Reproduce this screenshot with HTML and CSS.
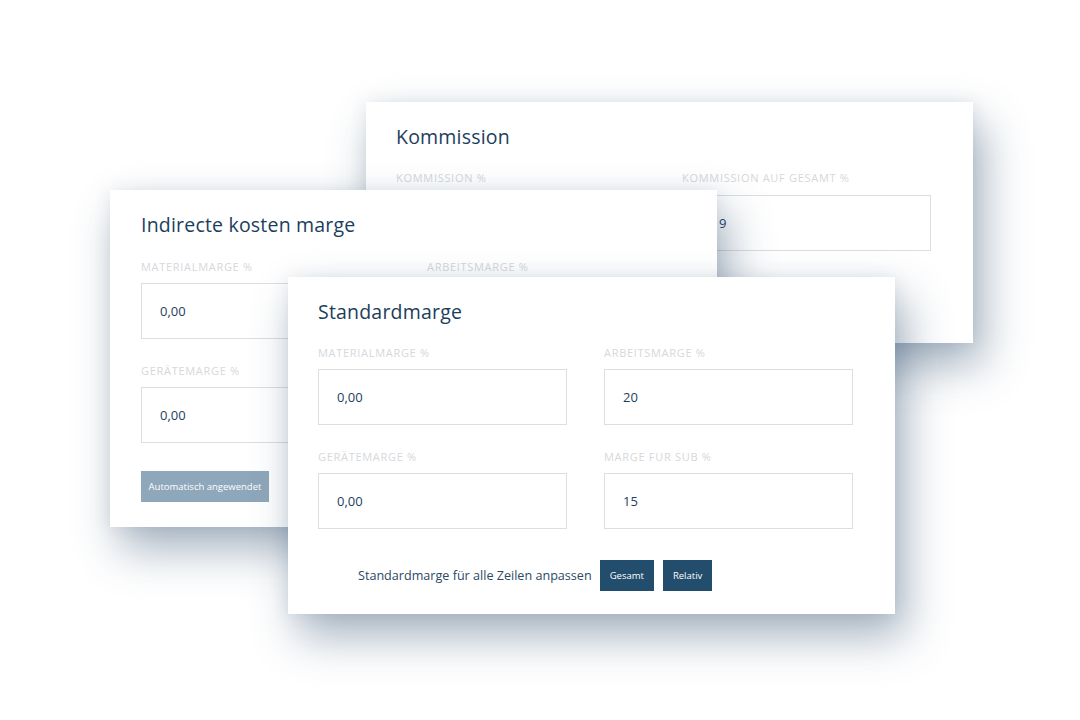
FILE: index.html
```html
<!DOCTYPE html>
<html lang="de">
<head>
<meta charset="utf-8">
<link rel="stylesheet" href="styles.css">
</head>
<body>
<div class="stage">
  <section class="card card-kommission">
    <h2 class="card-title">Kommission</h2>
    <div class="fields">
      <div class="field">
        <div class="label">Kommission %</div>
        <div class="input"></div>
      </div>
      <div class="field">
        <div class="label">Kommission auf Gesamt %</div>
        <div class="input">9</div>
      </div>
    </div>
  </section>

  <section class="card card-indirect">
    <h2 class="card-title">Indirecte kosten marge</h2>
    <div class="fields">
      <div class="field">
        <div class="label">Materialmarge %</div>
        <div class="input">0,00</div>
      </div>
      <div class="field">
        <div class="label">Arbeitsmarge %</div>
        <div class="input"></div>
      </div>
      <div class="field">
        <div class="label">Gerätemarge %</div>
        <div class="input">0,00</div>
      </div>
      <div class="field">
        <div class="label">Marge für Sub %</div>
        <div class="input"></div>
      </div>
    </div>
    <div class="actions">
      <button class="btn btn-muted">Automatisch angewendet</button>
    </div>
  </section>

  <section class="card card-standard">
    <h2 class="card-title">Standardmarge</h2>
    <div class="fields">
      <div class="field">
        <div class="label">Materialmarge %</div>
        <div class="input">0,00</div>
      </div>
      <div class="field">
        <div class="label">Arbeitsmarge %</div>
        <div class="input">20</div>
      </div>
      <div class="field">
        <div class="label">Gerätemarge %</div>
        <div class="input">0,00</div>
      </div>
      <div class="field">
        <div class="label">Marge fur Sub %</div>
        <div class="input">15</div>
      </div>
    </div>
    <div class="actions actions-indent">
      <span class="actions-text">Standardmarge für alle Zeilen anpassen</span>
      <button class="btn">Gesamt</button>
      <button class="btn">Relativ</button>
    </div>
  </section>
</div>
</body>
</html>
```
FILE: styles.css
```css
* { box-sizing: border-box; }
html, body {
  margin: 0;
  background: #ffffff;
}
body {
  font-family: "Open Sans", "DejaVu Sans", sans-serif;
  color: #1e405e;
}
.stage {
  position: relative;
  width: 1080px;
  height: 720px;
  overflow: hidden;
}
.card {
  position: absolute;
  width: 607px;
  background: #ffffff;
  padding: 23px 40px 23px 31px;
  box-shadow: 10px 22px 42px rgba(40, 72, 105, 0.42), 0 0 16px rgba(60, 90, 120, 0.10);
}
.card-kommission { left: 366px; top: 102px; height: 241px; padding-left: 30px; }
.card-indirect { left: 110px; top: 190px; height: 337px; padding-left: 31px; }
.card-standard { left: 288px; top: 277px; height: 337px; padding-left: 30px; }

.card-title {
  margin: 0;
  font-size: 19.5px;
  line-height: 24px;
  font-weight: 500;
  color: #1c3e5c;
  letter-spacing: 0.2px;
}
.fields {
  display: grid;
  grid-template-columns: 249px 249px;
  column-gap: 37px;
  row-gap: 26px;
  margin-top: 23px;
}
.card-indirect .fields { margin-top: 24px; }
.label {
  font-size: 11px;
  line-height: 12px;
  text-transform: uppercase;
  color: #d5d8dc;
  letter-spacing: 0.7px;
  margin-bottom: 10px;
}
.card-kommission .label { margin-bottom: 11px; }
.input {
  height: 56px;
  border: 1px solid #dcdee0;
  padding: 0 18px;
  display: flex;
  align-items: center;
  font-size: 13px;
  color: #1e405e;
}
.card-kommission .input { padding-left: 36px; }
.actions {
  display: flex;
  align-items: center;
  gap: 9px;
  margin-top: 28px;
}
.actions-indent {
  margin-top: 31px;
  padding-left: 40px;
}
.actions-text {
  font-size: 12.6px;
  color: #2a4a66;
  margin-right: -1px;
}
.btn {
  font-family: inherit;
  border: none;
  background: #234d6c;
  color: #ffffff;
  font-size: 9.5px;
  height: 31px;
  padding: 0 10px;
  cursor: pointer;
}
.btn-muted {
  background: #8fa7ba;
  width: 128px;
  padding: 0 6px;
}
```
